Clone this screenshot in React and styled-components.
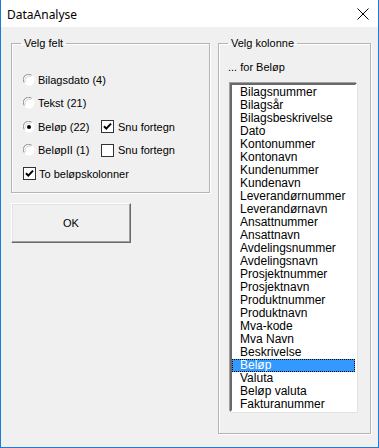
import React, { useState } from "react";
import styled, { createGlobalStyle } from "styled-components";

const GlobalStyle = createGlobalStyle`
  html, body {
    margin: 0;
    padding: 0;
    background: #ffffff;
  }
  * {
    box-sizing: border-box;
  }
`;

const columns = [
  "Bilagsnummer",
  "Bilagsår",
  "Bilagsbeskrivelse",
  "Dato",
  "Kontonummer",
  "Kontonavn",
  "Kundenummer",
  "Kundenavn",
  "Leverandørnummer",
  "Leverandørnavn",
  "Ansattnummer",
  "Ansattnavn",
  "Avdelingsnummer",
  "Avdelingsnavn",
  "Prosjektnummer",
  "Prosjektnavn",
  "Produktnummer",
  "Produktnavn",
  "Mva-kode",
  "Mva Navn",
  "Beskrivelse",
  "Beløp",
  "Valuta",
  "Beløp valuta",
  "Fakturanummer",
];

const RadioIcon = ({ checked }) => (
  <svg width="12" height="12" viewBox="0 0 12 12">
    <circle cx="6" cy="6" r="5.5" fill="#ffffff" />
    <path d="M1.2 8.6 A5.3 5.3 0 0 1 8.6 1.2" fill="none" stroke="#8f8f8f" strokeWidth="1" />
    <path d="M2.3 7.6 A4.2 4.2 0 0 1 7.6 2.3" fill="none" stroke="#cfcfcf" strokeWidth="1" />
    {checked && <circle cx="6" cy="6" r="2" fill="#000000" />}
  </svg>
);

const CheckIcon = ({ checked }) => (
  <svg width="13" height="13" viewBox="0 0 13 13">
    <rect x="0.5" y="0.5" width="12" height="12" fill="#ffffff" stroke="#333333" />
    {checked && (
      <path d="M3 6.2 L5.3 8.6 L10 3.6" fill="none" stroke="#000000" strokeWidth="2" />
    )}
  </svg>
);

export default function App() {
  const [field, setField] = useState("belop");
  const [flipA, setFlipA] = useState(true);
  const [flipB, setFlipB] = useState(false);
  const [twoCols, setTwoCols] = useState(true);
  const [selected, setSelected] = useState("Beløp");

  return (
    <>
      <GlobalStyle />
      <Window>
        <TitleBar>
          <Title>DataAnalyse</Title>
          <CloseButton>
            <svg width="12" height="12" viewBox="0 0 12 12">
              <path d="M0.5 0.5 L11.5 11.5 M11.5 0.5 L0.5 11.5" stroke="#000" strokeWidth="1" />
            </svg>
          </CloseButton>
        </TitleBar>
        <Body>
          <LeftColumn>
            <Group $height={158}>
              <Legend>Velg felt</Legend>
              <Options>
                <Row>
                  <Option onClick={() => setField("bilagsdato")}>
                    <RadioIcon checked={field === "bilagsdato"} />
                    <span>Bilagsdato (4)</span>
                  </Option>
                </Row>
                <Row>
                  <Option onClick={() => setField("tekst")}>
                    <RadioIcon checked={field === "tekst"} />
                    <span>Tekst (21)</span>
                  </Option>
                </Row>
                <Row>
                  <Option onClick={() => setField("belop")}>
                    <RadioIcon checked={field === "belop"} />
                    <span>Beløp (22)</span>
                  </Option>
                  <Check onClick={() => setFlipA(!flipA)}>
                    <CheckIcon checked={flipA} />
                    <span>Snu fortegn</span>
                  </Check>
                </Row>
                <Row>
                  <Option onClick={() => setField("belop2")}>
                    <RadioIcon checked={field === "belop2"} />
                    <span>BeløpII (1)</span>
                  </Option>
                  <Check onClick={() => setFlipB(!flipB)}>
                    <CheckIcon checked={flipB} />
                    <span>Snu fortegn</span>
                  </Check>
                </Row>
                <Row>
                  <Check $first onClick={() => setTwoCols(!twoCols)}>
                    <CheckIcon checked={twoCols} />
                    <span>To beløpskolonner</span>
                  </Check>
                </Row>
              </Options>
            </Group>
            <Button>OK</Button>
          </LeftColumn>
          <Group $height={399} $width={153}>
            <Legend>Velg kolonne</Legend>
            <Caption>... for Beløp</Caption>
            <ListBox>
              {columns.map((c) => (
                <ListItem key={c} $active={c === selected} onClick={() => setSelected(c)}>
                  {c}
                </ListItem>
              ))}
            </ListBox>
          </Group>
        </Body>
      </Window>
    </>
  );
}

const Window = styled.div`
  width: 379px;
  height: 448px;
  display: flex;
  flex-direction: column;
  background: #f0f0f0;
  border: 1px solid #1c7ad8;
  border-top: none;
  font-family: "Liberation Sans", Arial, sans-serif;
  font-size: 11px;
  color: #000;
`;

const TitleBar = styled.div`
  height: 27px;
  flex: none;
  display: flex;
  align-items: center;
  justify-content: space-between;
  background: #ffffff;
  padding: 0 9px 0 6px;
`;

const Title = styled.div`
  font-family: "Noto Sans", "Liberation Sans", sans-serif;
  font-size: 12px;
  margin-top: 1px;
`;

const CloseButton = styled.div`
  display: flex;
  align-items: center;
  margin-top: 1px;
`;

const Body = styled.div`
  flex: 1;
  display: flex;
  gap: 8px;
  padding: 8px 0 0 10px;
  align-items: flex-start;
`;

const LeftColumn = styled.div`
  display: flex;
  flex-direction: column;
  gap: 10px;
`;

const Group = styled.fieldset`
  margin: 0;
  padding: 0 0 0 11px;
  width: ${(p) => p.$width || 199}px;
  height: ${(p) => p.$height}px;
  border: 1px solid #b4b4b4;
  border-radius: 0;
  box-shadow: inset 1px 1px 0 #ffffff, 1px 1px 0 #ffffff;
  display: flex;
  flex-direction: column;
  min-width: 0;
`;

const Legend = styled.legend`
  margin-left: -2px;
  padding: 0 3px;
  font-size: 11px;
  line-height: 16px;
`;

const Options = styled.div`
  display: flex;
  flex-direction: column;
  padding-top: 17px;
`;

const Row = styled.div`
  height: 23.5px;
  display: flex;
  align-items: center;
`;

const Option = styled.label`
  width: 78px;
  display: flex;
  align-items: center;
  gap: 3px;
  cursor: default;
  white-space: nowrap;
  svg {
    flex: none;
  }
`;

const Check = styled.label`
  display: flex;
  align-items: center;
  gap: ${(p) => (p.$first ? 3 : 4)}px;
  white-space: nowrap;
  svg {
    flex: none;
  }
`;

const Button = styled.button`
  width: 120px;
  height: 40px;
  margin: 0;
  padding: 0;
  background: #f0f0f0;
  border: 1px solid;
  border-color: #ffffff #696969 #696969 #ffffff;
  box-shadow: inset -1px -1px 0 #a0a0a0, inset 1px 1px 0 #e3e3e3;
  font-family: "Liberation Sans", Arial, sans-serif;
  font-size: 11px;
  color: #000;
`;

const Caption = styled.div`
  padding-top: 8px;
  margin-left: -2px;
  line-height: 16px;
`;

const ListBox = styled.div`
  margin-top: 8px;
  width: 127px;
  height: 329px;
  background: #ffffff;
  border: 2px solid;
  border-color: #696969 #ffffff #ffffff #696969;
  box-shadow: -1px -1px 0 #a0a0a0, 1px 1px 0 #e3e3e3;
  padding-top: 1px;
  overflow: hidden;
`;

const ListItem = styled.div`
  height: 13px;
  line-height: 13px;
  padding-left: 8px;
  font-size: 12px;
  white-space: nowrap;
  background: ${(p) => (p.$active ? "#3399ff" : "transparent")};
  color: ${(p) => (p.$active ? "#ffffff" : "#000000")};
  outline: ${(p) => (p.$active ? "1px dotted #000" : "none")};
  outline-offset: -1px;
`;
